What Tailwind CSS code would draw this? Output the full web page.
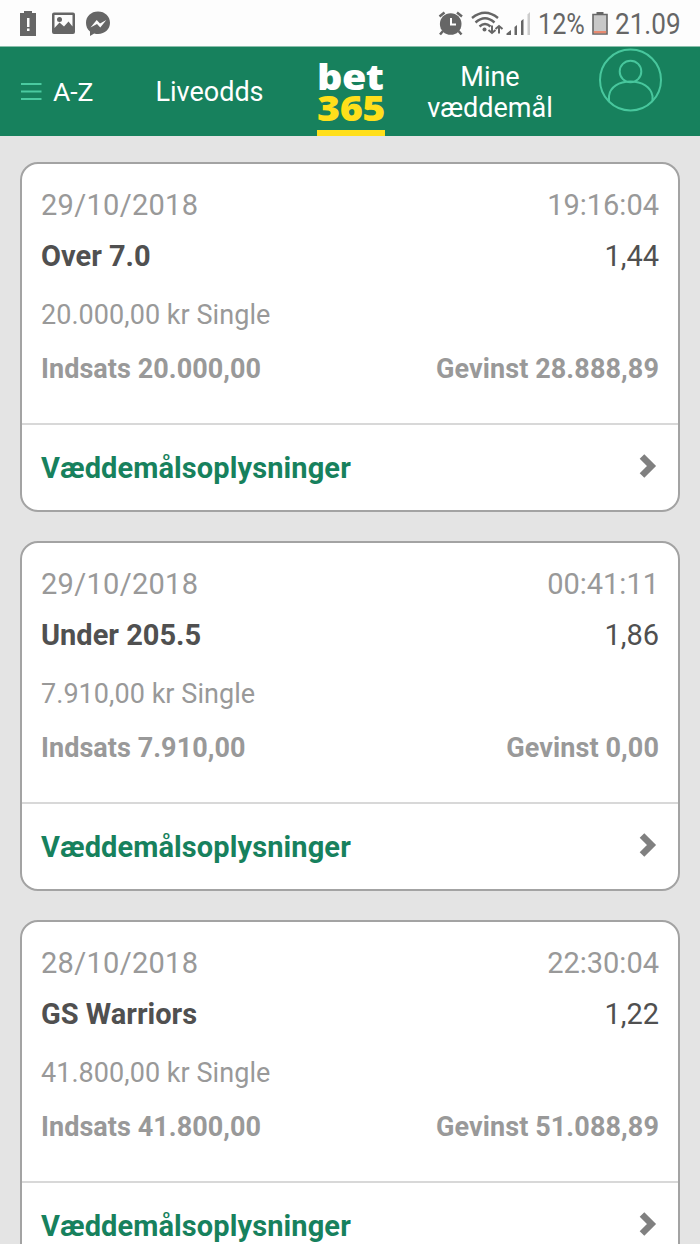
<!DOCTYPE html>
<html lang="da">
<head>
<meta charset="utf-8">
<title>bet365 – Mine væddemål</title>
<script src="https://cdn.jsdelivr.net/npm/@tailwindcss/browser@4"></script>
</head>
<body class="bg-[#e4e4e4] font-['Roboto',sans-serif]">
<div class="w-[700px] h-[1244px] overflow-hidden flex flex-col">
  <div class="h-[46px] shrink-0 bg-[#fdfdfd] flex items-center justify-between text-[#666] pl-[19px] pr-[20px]">
    <svg width="92" height="46" viewBox="0 0 92 46" fill="#666">
      <path fill-rule="evenodd" d="M1 13h4v-2h8v2h4v23H1zM8 18v9h2.500v-9zM8 28.500v2.500h2.500v-2.500z"/>
      <path fill-rule="evenodd" d="M34 12.500h20q2 0 2 2v17.500q0 2-2 2H35q-2 0-2-2V14.500q0-2 2-2zM35.500 15v13l5-5.500 4.500 4 4.500-5 4 5V15z"/>
      <circle cx="40.500" cy="19.500" r="2.500"/>
      <path fill-rule="evenodd" d="M79 11.500c7 0 12 4.900 12 11.300S86 34 79 34c-1.300 0-2.600-.2-3.800-.6L71 36v-4.500c-2.700-2.100-4-5.100-4-8.700 0-6.400 5-11.300 12-11.300zM71.500 27.500l6.500-3.500 3.300 3.500 6-7.500-6.300 3.500-3.300-3.500z"/>
    </svg>
    <div class="flex items-center h-full">
      <svg width="103" height="46" viewBox="0 0 103 46" fill="none" stroke="#666">
        <circle cx="15.700" cy="24" r="10.800" fill="#666" stroke="none"/>
        <path d="M16 18v6.500h5" stroke="#fff" stroke-width="2"/>
        <path d="M4.500 16.500l5-4M22 12.500l5 4M8 31l-3 3.500M23.500 31l3 3.500" stroke-width="2.500"/>
        <path d="M37 18Q50 7.500 63 18M40.500 22.500Q50 14 59.500 22.500M44.500 26.500Q50 21.500 55.500 26.500" stroke-width="2.400"/>
        <circle cx="49.500" cy="29.500" r="2" fill="#666" stroke="none"/>
        <path d="M57 25.500v7.500M53.500 30l3.500 3 3.500-3M64 33.500v-7.500M60.500 29l3.500-3 3.500 3" stroke-width="2"/>
        <path d="M71.500 35v-1.500l4.500-3.500v5zM79.500 35v-8l2.500-2V35zM86 35V21l2.500-2V35z" fill="#666" stroke="none"/>
        <path d="M92.500 35V14.500l2.500-2.500V35z" fill="#ccc" stroke="none"/>
      </svg>
      <span class="w-[53px] whitespace-nowrap text-[29px] leading-[46px]"><span class="inline-block origin-left scale-x-[.87] translate-y-[1px]">12%</span></span>
      <svg width="22" height="46" viewBox="0 0 22 46">
        <path d="M5.500 12h7v3h-7z" fill="#666"/>
        <path d="M2 14.500h14v19.500H2z" fill="#c8c8c8" stroke="#666" stroke-width="1.600"/>
        <path d="M2.800 31h12.400v2.300H2.800z" fill="#e88a70"/>
      </svg>
      <span class="w-[67px] whitespace-nowrap text-[29px] leading-[46px] pl-[2px]"><span class="inline-block origin-left scale-x-[.9] translate-y-[1px]">21.09</span></span>
    </div>
  </div>

  <nav class="h-[90px] shrink-0 bg-[#17815d] flex text-white text-[27px] leading-[31px] border-t border-[#8abfac]">
    <div class="w-[134px] flex items-center pl-[21px] gap-[11px]">
      <svg width="21" height="20" viewBox="0 0 21 20" stroke="#4bcaa0" stroke-width="2"><path d="M0 2h20.500M0 9.500h20.500M0 17h20.500"/></svg>
      <span class="text-[26.500px]">A-Z</span>
    </div>
    <div class="w-[151px] flex items-center justify-center pt-[2px]">Liveodds</div>
    <div class="w-[131px] flex justify-center">
      <div class="w-[68px] h-full flex flex-col border-b-[6px] border-[#ffdf1b] font-['Noto_Sans','Open_Sans'] font-black pt-[14px]">
        <span class="h-[31px] leading-[31px] text-[36px] tracking-[-0.5px]"><span class="inline-block origin-left scale-x-[1.1]">bet</span></span>
        <span class="h-[31px] leading-[31px] text-[36px] tracking-[-0.5px] text-[#ffdf1b]"><span class="inline-block origin-left scale-x-[1.1]">365</span></span>
      </div>
    </div>
    <div class="w-[148px] flex items-center justify-center text-center pt-[2px]">Mine<br>væddemål</div>
    <div class="flex-1 pl-[34px] pt-[1px]">
      <svg width="66" height="66" viewBox="0 0 66 66" fill="none" stroke="#48c79d" stroke-width="2">
        <circle cx="32.500" cy="32" r="30.500"/><circle cx="32.500" cy="23.500" r="10.800"/>
        <path d="M11 53V48C12 39 21 33.500 32.500 33.500S53 39 54.500 48V53"/>
      </svg>
    </div>
  </nav>

  <main id="bets" class="flex flex-col gap-[29px] pt-[26px] px-[20px]"></main>
</div>

<template id="card">
  <section class="h-[350px] shrink-0 bg-white rounded-[18px] border-2 border-[#a3a3a3] text-[#999] text-[29px]">
    <div class="h-[261px] px-[19px] pt-[16px] pb-[31px] border-b-2 border-[#d8d8d8]">
      <div class="h-[51px] flex items-center justify-between"><span class="date tracking-[.3px]"></span><span class="time"></span></div>
      <div class="h-[52px] flex items-center justify-between text-[#505050]"><b class="name"></b><span class="odds"></span></div>
      <div class="h-[65px] flex items-center text-[27px]"><span class="kind tracking-[.05px]"></span></div>
      <div class="h-[42px] flex items-center justify-between text-[27px] font-bold"><span class="stake tracking-[.05px]"></span><span class="win tracking-[.1px]"></span></div>
    </div>
    <div class="h-[85px] pl-[19px] pr-[19px] flex items-center justify-between text-[#17815d] font-bold">
      <span class="tracking-[.1px] pt-[2px]">Væddemålsoplysninger</span>
      <svg width="20" height="30" viewBox="0 0 20 30" fill="none" stroke="#808080" stroke-width="6.500"><path d="M3 3.500l9.500 9.500L3 22.500"/></svg>
    </div>
  </section>
</template>
<script>
const bets = [
  ['29/10/2018','19:16:04','Over 7.0','1,44','20.000,00 kr Single','Indsats 20.000,00','Gevinst 28.888,89'],
  ['29/10/2018','00:41:11','Under 205.5','1,86','7.910,00 kr Single','Indsats 7.910,00','Gevinst 0,00'],
  ['28/10/2018','22:30:04','GS Warriors','1,22','41.800,00 kr Single','Indsats 41.800,00','Gevinst 51.088,89']
];
const fields = ['date','time','name','odds','kind','stake','win'];
for (const bet of bets) {
  const card = document.getElementById('card').content.cloneNode(true);
  fields.forEach((f, i) => card.querySelector('.' + f).textContent = bet[i]);
  document.getElementById('bets').append(card);
}
</script>
</body>
</html>
